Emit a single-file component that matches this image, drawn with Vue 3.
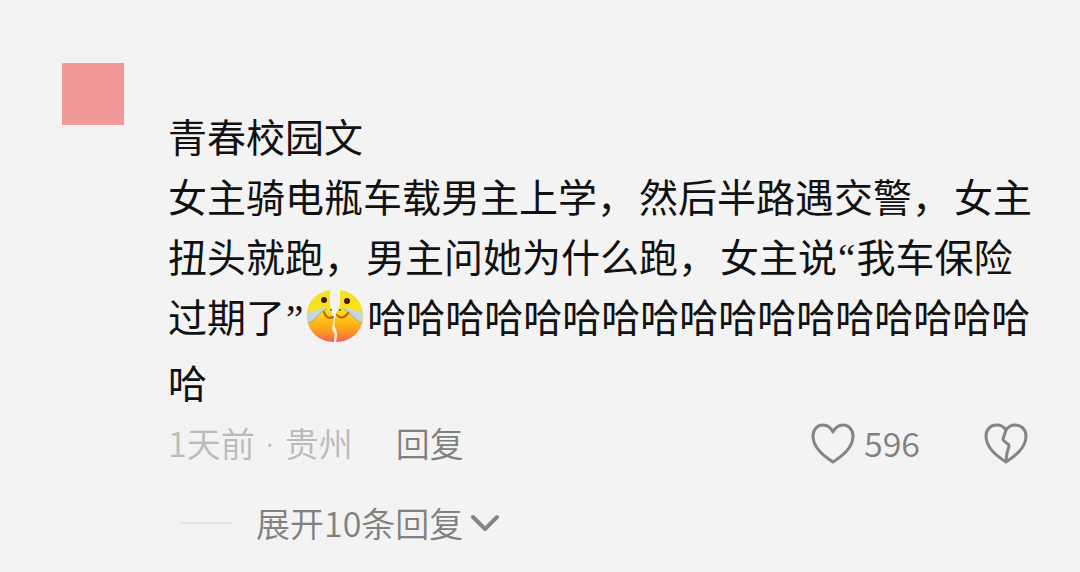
<script setup>
const laughs = '哈'.repeat(18)
</script>

<template>
  <article class="comment">
    <div class="avatar" role="img" aria-label="头像"></div>
    <div class="body">
      <p class="text">青春校园文<br />女主骑电瓶车载男主上学<span class="pause">，</span>然后半路遇交警<span class="pause">，</span>女主扭头就跑<span class="pause">，</span>男主问她为什么跑<span class="pause">，</span>女主说<span class="quote">“</span>我车保险过期了<span class="quote">”</span><svg class="emoji" viewBox="0 0 58 54" role="img" aria-label="裂开">
          <defs>
            <linearGradient id="face" gradientUnits="userSpaceOnUse" x1="0" y1="0" x2="0" y2="54">
              <stop offset="0" stop-color="#f3e22a" />
              <stop offset="0.4" stop-color="#fbe01d" />
              <stop offset="0.65" stop-color="#fdb515" />
              <stop offset="0.85" stop-color="#f98a2c" />
              <stop offset="1" stop-color="#f0566a" />
            </linearGradient>
          </defs>
          <path fill="url(#face)" d="M24 1C10 3 1 13 1 27c0 15 12 26 27 26l1-7-3-6 2-9-3-9-1-9z" />
          <path fill="url(#face)" d="M34 1c14 2 23 12 23 26 0 15-12 26-27 26l1-8-3-6 1-9 1-6 4-8z" />
          <path fill="#c9d5dc" d="M1 23c6 1 11-5 20-4-6 3-10 12-19 15z" />
          <path fill="#c9d5dc" d="M57 23c-6 1-11-5-20-4 6 3 10 12 19 15z" />
          <path class="tear" d="M2 34C10 32 13 22 21 20M56 34C48 32 45 22 37 20" />
          <circle cx="18" cy="11" r="3" fill="#48151b" />
          <circle cx="41" cy="12" r="3" fill="#48151b" />
          <path class="smile" d="M18 23c1 5 5 7 9 5M31 26c3 4 8 3 11-2" />
          <circle cx="25" cy="21" r="1" fill="#70501b" />
          <circle cx="34" cy="21" r="1" fill="#70501b" />
          <path class="crack" d="M28 38l2 6-1 8" />
        </svg>{{ laughs }}</p>

      <footer class="meta">
        <span class="when">1天前<span class="dot"> · </span>贵州</span>
        <button class="reply" type="button">回复</button>
        <button class="like" type="button" aria-label="赞 596">
          <svg class="heart" viewBox="0 0 44 42" aria-hidden="true">
            <path d="M22 40C13 34 2 26 2 14 2 7 7 3 12 3c5 0 8 3 10 7 2-4 5-7 10-7 5 0 10 4 10 11 0 12-11 20-20 26z" />
          </svg>
          <span>596</span>
        </button>
        <button class="dislike" type="button" aria-label="不喜欢">
          <svg class="heart" viewBox="0 0 44 42" aria-hidden="true">
            <path d="M22 40C13 34 2 26 2 14 2 7 7 3 13 3c4 0 7 2 9 5 2-3 5-5 9-5 6 0 11 4 11 11 0 12-11 20-20 26z" />
            <path d="M22 8l-3 9c0 3 6 4 6 7l-2 7-1 8" />
          </svg>
        </button>
      </footer>

      <button class="expand" type="button">
        <span class="rule"></span>
        <span>展开10条回复</span>
        <svg class="chevron" viewBox="0 0 28 18" aria-hidden="true">
          <path d="M2 3l12 12L26 3" />
        </svg>
      </button>
    </div>
  </article>
</template>

<style>
body {
  margin: 0;
  background: #f3f3f3;
}
</style>

<style scoped>
.comment {
  display: flex;
  align-items: flex-start;
  gap: 44px;
  padding: 63px 46px 20px 62px;
  font-family: "Noto Sans CJK SC", "Noto Sans", sans-serif;
}
.avatar {
  flex: none;
  width: 62px;
  height: 62px;
  background: #f29a9a;
}
.body {
  flex: 1;
  min-width: 0;
  padding-top: 42px;
}
.text {
  margin: 0;
  color: #111;
  font-size: 39px;
  line-height: 60px;
}
.pause {
  margin-right: 3px;
}
.quote {
  padding: 0 1px;
  font-family: "Liberation Serif", serif;
  line-height: 1;
}
.emoji {
  width: 58px;
  height: 54px;
  margin: 0 3px 8px 2px;
  vertical-align: -19px;
}
.tear,
.smile,
.crack {
  fill: none;
  stroke-linecap: round;
}
.tear {
  stroke: #a9a67c;
}
.smile {
  stroke: #ba5b16;
  stroke-width: 2;
}
.crack {
  stroke: #fdf3c0;
  stroke-width: 2;
}
button {
  padding: 0;
  border: 0;
  background: none;
  color: #808080;
  font: inherit;
  cursor: pointer;
}
.meta {
  display: flex;
  align-items: center;
  margin-top: 4px;
  font-size: 34px;
  font-weight: 350;
  line-height: 56px;
}
.when {
  color: #bababa;
}
.dot {
  padding: 0 2px;
  font-family: "Noto Sans", sans-serif;
  line-height: 1;
  white-space: pre;
}
.reply {
  margin-left: 43px;
}
.like {
  display: flex;
  align-items: center;
  gap: 9px;
  margin-left: auto;
}
.dislike {
  display: flex;
  margin-left: 64px;
  margin-right: 6px;
}
.heart {
  width: 44px;
  height: 42px;
}
.heart path,
.chevron path {
  fill: none;
  stroke: #858585;
  stroke-width: 4;
  stroke-linejoin: round;
  stroke-linecap: round;
}
.heart path {
  stroke-width: 3;
}
.expand {
  display: flex;
  align-items: center;
  margin: 24px 0 0 12px;
  font-size: 34px;
  font-weight: 350;
  line-height: 56px;
}
.rule {
  width: 52px;
  height: 2px;
  margin-right: 24px;
  background: #e5e5e5;
}
.chevron {
  width: 28px;
  height: 18px;
  margin-left: 8px;
}
</style>
